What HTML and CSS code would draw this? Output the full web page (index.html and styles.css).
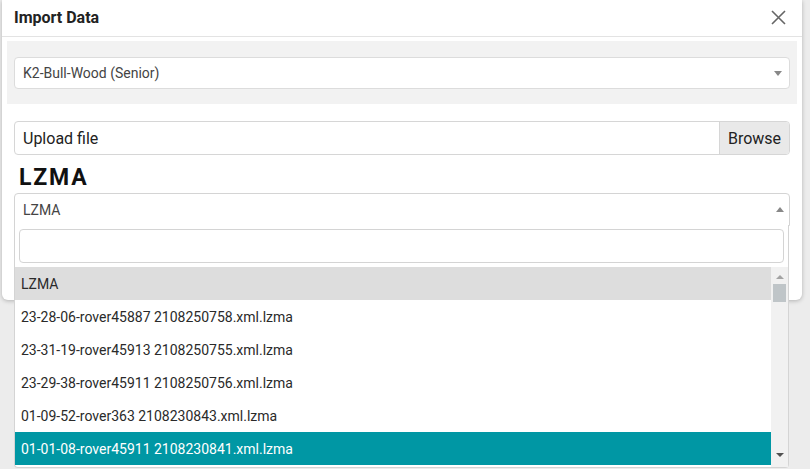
FILE: index.html
```html
<!DOCTYPE html>
<html>
<head>
<meta charset="utf-8">
<link rel="stylesheet" href="styles.css">
</head>
<body>
<div class="page">
  <div class="modal">
    <div class="modal-header">
      <span class="title">Import Data</span>
      <svg class="close" width="15" height="15" viewBox="0 0 15 15"><path d="M1 1L14 14M14 1L1 14" stroke="#666" stroke-width="1.6" fill="none"/></svg>
    </div>
    <div class="modal-body">
      <div class="panel">
        <div class="select">
          <span>K2-Bull-Wood (Senior)</span>
          <span class="caret-down"></span>
        </div>
      </div>
      <div class="section">
        <div class="upload">
          <span class="upload-label">Upload file</span>
          <span class="browse">Browse</span>
        </div>
        <h2 class="heading">LZMA</h2>
        <div class="select2">
          <span>LZMA</span>
          <span class="caret-up"></span>
        </div>
      </div>
    </div>
  </div>
  <div class="dropdown">
    <div class="search-wrap"><div class="search"></div></div>
    <div class="results">
      <ul class="options">
        <li class="opt hover">LZMA</li>
        <li class="opt">23-28-06-rover45887 2108250758.xml.lzma</li>
        <li class="opt">23-31-19-rover45913 2108250755.xml.lzma</li>
        <li class="opt">23-29-38-rover45911 2108250756.xml.lzma</li>
        <li class="opt">01-09-52-rover363 2108230843.xml.lzma</li>
        <li class="opt selected">01-01-08-rover45911 2108230841.xml.lzma</li>
      </ul>
      <div class="scrollbar">
        <span class="sb-up"></span>
        <span class="sb-thumb"></span>
        <span class="sb-fill"></span>
        <span class="sb-down"></span>
      </div>
    </div>
  </div>
</div>
</body>
</html>
```
FILE: styles.css
```css
* { box-sizing: border-box; }
html, body { margin: 0; padding: 0; }
body {
  background: #ececec;
  font-family: Roboto, "Liberation Sans", sans-serif;
  color: #333;
}
.page {
  position: relative;
  width: 810px;
  height: 469px;
  overflow: hidden;
}
.modal {
  margin-left: 2px;
  width: 800px;
  height: 300px;
  background: #fff;
  border-radius: 0 0 6px 6px;
  box-shadow: 0 1px 4px rgba(0,0,0,0.25);
}
.modal-header {
  height: 37px;
  border-bottom: 1px solid #e3e3e3;
  display: flex;
  align-items: center;
  justify-content: space-between;
  padding: 0 16px 0 12px;
}
.title {
  font-size: 16px;
  font-weight: 700;
  color: #222;
  margin-top: -1px;
}
.close { display: block; margin-top: -1px; }
.modal-body {
  padding: 4px 5px 0 5px;
}
.panel {
  background: #f2f2f2;
  padding: 16px 7px 15px 7px;
}
.select {
  height: 32px;
  background: #fff;
  border: 1px solid #dcdcdc;
  border-radius: 4px;
  display: flex;
  align-items: center;
  justify-content: space-between;
  padding: 0 6px 0 8px;
  font-size: 14px;
  color: #444;
}
.caret-down {
  width: 0; height: 0;
  border-left: 4px solid transparent;
  border-right: 4px solid transparent;
  border-top: 5px solid #888;
  margin-right: 1px;
}
.section {
  padding: 17px 7px 0 7px;
}
.upload {
  height: 34px;
  border: 1px solid #d6d6d6;
  border-radius: 4px;
  display: flex;
  align-items: stretch;
  overflow: hidden;
  font-size: 16px;
  color: #222;
}
.upload-label {
  flex: 1;
  display: flex;
  align-items: center;
  padding-left: 8px;
}
.browse {
  width: 70px;
  display: flex;
  align-items: center;
  justify-content: center;
  background: #e9e9e9;
  border-left: 1px solid #d6d6d6;
}
.heading {
  margin: 9px 0 1px 5px;
  font-size: 23px;
  line-height: 28px;
  font-weight: 700;
  letter-spacing: 1.8px;
  color: #111;
}
.select2 {
  height: 33px;
  border: 1px solid #d4d4d4;
  border-radius: 4px 4px 0 0;
  display: flex;
  align-items: center;
  justify-content: space-between;
  padding: 0 5px 0 8px;
  font-size: 14px;
  color: #444;
}
.caret-up {
  width: 0; height: 0;
  border-left: 4px solid transparent;
  border-right: 4px solid transparent;
  border-bottom: 5px solid #888;
}
.dropdown {
  position: absolute;
  left: 14px;
  top: 225px;
  width: 775px;
  background: #fff;
  border: 1px solid #d4d4d4;
  border-top: none;
  border-radius: 0 0 4px 4px;
}
.search-wrap {
  padding: 4px 4px 4px 4px;
}
.search {
  height: 34px;
  border: 1px solid #d4d4d4;
  border-radius: 4px;
}
.results {
  display: flex;
  height: 200px;
  overflow: hidden;
}
.options {
  list-style: none;
  margin: 0;
  padding: 0;
  flex: 1;
}
.opt {
  height: 33px;
  display: flex;
  align-items: center;
  padding-left: 6px;
  font-size: 14px;
  color: #2a2a2a;
  white-space: nowrap;
}
.opt.hover { background: #dddddd; }
.opt.selected { background: #0097a4; color: #fff; }
.scrollbar {
  width: 17px;
  background: #f1f1f1;
  display: flex;
  flex-direction: column;
  align-items: center;
}
.sb-up {
  margin-top: 8px;
  width: 0; height: 0;
  border-left: 4px solid transparent;
  border-right: 4px solid transparent;
  border-bottom: 4px solid #a3a3a3;
}
.sb-thumb {
  margin-top: 5px;
  width: 13px;
  height: 18px;
  background: #bfc5c8;
}
.sb-fill { flex: 1; }
.sb-down {
  margin-bottom: 10px;
  width: 0; height: 0;
  border-left: 4px solid transparent;
  border-right: 4px solid transparent;
  border-top: 4px solid #505050;
}
```
